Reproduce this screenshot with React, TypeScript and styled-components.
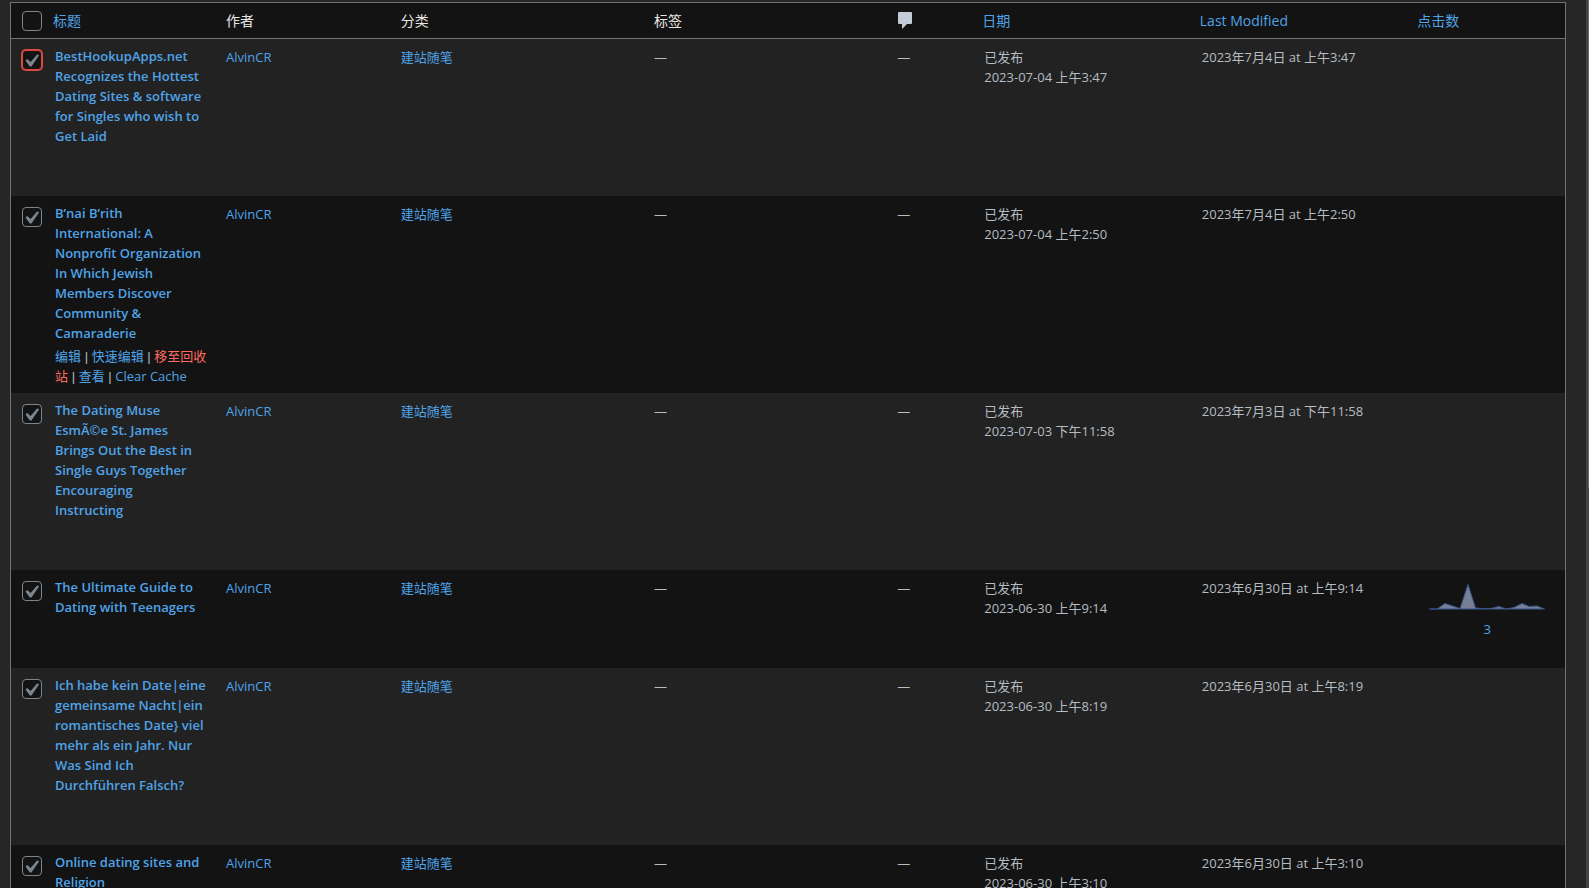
import React, { useState } from "react";
import styled, { createGlobalStyle } from "styled-components";

const color = {
  page: "#262626",
  dark: "#131313",
  stripe: "#222222",
  border: "#727272",
  link: "#4fa3e8",
  text: "#b5bdc2",
  heading: "#e8e6e3",
  danger: "#ff6b60",
  mark: "#7b858e",
};

const GlobalStyle = createGlobalStyle`
  * { box-sizing: border-box; }
  html { background: ${color.page}; overflow: hidden; }
  body {
    margin: 0;
    color: ${color.text};
    font-family: "Open Sans", "Noto Sans CJK SC", sans-serif;
    font-size: 13px;
    line-height: 20px;
  }
`;

const Page = styled.div`
  display: flex;
  height: 100vh;
  overflow: hidden;
`;

const Content = styled.main`
  flex: 1;
  min-width: 0;
  padding: 2px 20px 0 10px;
`;

const ScrollTrack = styled.div`
  display: flex;
  justify-content: flex-end;
  width: 3px;
  background: #454341;
`;

const ScrollThumb = styled.div`
  width: 1px;
  height: 55%;
  background: #686460;
`;

const Table = styled.table`
  width: 100%;
  table-layout: fixed;
  border: 1px solid ${color.border};
  border-spacing: 0;
  background: ${color.dark};
`;

const Col = styled.col<{ $width: string }>`
  width: ${(p) => p.$width};
`;

const HeadCell = styled.th<{ $sortable?: boolean }>`
  height: 36px;
  padding: 0 ${(p) => (p.$sortable ? 8 : 10)}px;
  border-bottom: 1px solid ${color.border};
  color: ${color.heading};
  font-size: 14px;
  font-weight: 400;
  text-align: left;
  vertical-align: middle;
`;

const Row = styled.tr`
  height: 98px;
  vertical-align: top;
  &:nth-child(odd) { background: ${color.stripe}; }
`;

const Cell = styled.td`
  padding: 8px 10px;
`;

const TitleCell = styled.td`
  padding: 7px 10px;
`;

const CheckHeadCell = styled(HeadCell)`
  padding: 1px 0 0 11px;
`;

const CheckCell = styled.td`
  padding: 11px 0 0 11px;
`;

const Link = styled.a<{ $danger?: boolean }>`
  color: ${(p) => (p.$danger ? color.danger : color.link)};
  text-decoration: none;
`;

const TitleLink = styled(Link)`
  display: block;
  font-weight: 600;
  white-space: pre;
`;

const RowActions = styled.div`
  min-height: 43px;
  padding-top: 3px;
  white-space: pre;
`;

const Separator = styled.span`
  font-family: "Liberation Sans", sans-serif;
  line-height: 16px;
`;

const CheckLabel = styled.label`
  position: relative;
  display: block;
  width: 20px;
  height: 20px;
`;

const CheckInput = styled.input<{ $alert?: boolean }>`
  appearance: none;
  display: block;
  width: 20px;
  height: 20px;
  margin: 0;
  border: 1px solid ${(p) => (p.$alert ? "#e0483e" : color.mark)};
  border-radius: 4px;
  background: ${color.dark};
  box-shadow: ${(p) => (p.$alert ? "0 0 0 1px #e0483e" : "none")};
`;

const CheckMark = styled.svg`
  position: absolute;
  top: -2px;
  left: -4px;
  width: 26px;
  height: 26px;
  fill: ${color.mark};
  pointer-events: none;
`;

const CommentIcon = styled.svg`
  display: block;
  margin-left: 1px;
  fill: #c3ccd6;
`;

const Stats = styled(Link)`
  display: flex;
  flex-direction: column;
  align-items: center;
  gap: 8px;
  padding-top: 5px;
`;

function Checkbox({ label, initial, alert }: { label: string; initial?: boolean; alert?: boolean }) {
  const [checked, setChecked] = useState(Boolean(initial));
  return (
    <CheckLabel>
      <CheckInput
        type="checkbox"
        aria-label={label}
        checked={checked}
        $alert={alert}
        onChange={(e) => setChecked(e.target.checked)}
      />
      {checked && (
        <CheckMark viewBox="0 0 20 20" aria-hidden="true">
          <path d="M14.83 4.89l1.34.94-5.81 8.38H9.02L5.78 9.67l1.34-1.25 2.57 2.4z" />
        </CheckMark>
      )}
    </CheckLabel>
  );
}

function Sparkline() {
  return (
    <svg width="116" height="28" viewBox="0 0 116 28" aria-hidden="true">
      <path
        d="M0.5 26 L8 26 L16 20.5 L31 25.5 L39 1.5 L46.5 25 L54 25.5 L62 25.5 L70 23.5 L77 26 L85 24.5 L93 20.5 L100 23.5 L108 23 L115.5 26 Z"
        fill="#767f93"
        stroke="#36568f"
        strokeWidth="1"
      />
    </svg>
  );
}

interface Post {
  title: string;
  published: string;
  modified: string;
  actions?: boolean;
  clicks?: number;
}

const posts: Post[] = [
  {
    title: "BestHookupApps.net\nRecognizes the Hottest\nDating Sites & software\nfor Singles who wish to\nGet Laid",
    published: "2023-07-04 上午3:47",
    modified: "2023年7月4日 at 上午3:47",
  },
  {
    title: "B’nai B’rith\nInternational: A\nNonprofit Organization\nIn Which Jewish\nMembers Discover\nCommunity &\nCamaraderie",
    published: "2023-07-04 上午2:50",
    modified: "2023年7月4日 at 上午2:50",
    actions: true,
  },
  {
    title: "The Dating Muse\nEsmÃ©e St. James\nBrings Out the Best in\nSingle Guys Together\nEncouraging\nInstructing",
    published: "2023-07-03 下午11:58",
    modified: "2023年7月3日 at 下午11:58",
  },
  {
    title: "The Ultimate Guide to\nDating with Teenagers",
    published: "2023-06-30 上午9:14",
    modified: "2023年6月30日 at 上午9:14",
    clicks: 3,
  },
  {
    title: "Ich habe kein Date|eine\ngemeinsame Nacht|ein\nromantisches Date} viel\nmehr als ein Jahr. Nur\nWas Sind Ich\nDurchführen Falsch?",
    published: "2023-06-30 上午8:19",
    modified: "2023年6月30日 at 上午8:19",
  },
  {
    title: "Online dating sites and\nReligion",
    published: "2023-06-30 上午3:10",
    modified: "2023年6月30日 at 上午3:10",
  },
];

const columns = ["34px", "11%", "11.25%", "16.3%", "15.65%", "5.6%", "14%", "14%", "auto"];

export default function App() {
  return (
    <>
      <GlobalStyle />
      <Page>
        <Content>
          <Table>
            <colgroup>
              {columns.map((width, i) => (
                <Col key={i} $width={width} />
              ))}
            </colgroup>
            <thead>
              <tr>
                <CheckHeadCell><Checkbox label="全选" /></CheckHeadCell>
                <HeadCell $sortable><Link href="#title">标题</Link></HeadCell>
                <HeadCell>作者</HeadCell>
                <HeadCell>分类</HeadCell>
                <HeadCell>标签</HeadCell>
                <HeadCell>
                  <CommentIcon width="14" height="17" viewBox="0 0 14 17" role="img" aria-label="评论">
                    <path d="M1 0h12a1 1 0 0 1 1 1v10a1 1 0 0 1-1 1H9L4 17v-5H1a1 1 0 0 1-1-1V1a1 1 0 0 1 1-1z" />
                  </CommentIcon>
                </HeadCell>
                <HeadCell $sortable><Link href="#date">日期</Link></HeadCell>
                <HeadCell $sortable><Link href="#modified">Last Modified</Link></HeadCell>
                <HeadCell $sortable><Link href="#clicks">点击数</Link></HeadCell>
              </tr>
            </thead>
            <tbody>
              {posts.map((post, i) => (
                <Row key={post.title}>
                  <CheckCell><Checkbox label={post.title} initial alert={i === 0} /></CheckCell>
                  <TitleCell>
                    <TitleLink href="#post">{post.title}</TitleLink>
                    <RowActions>
                      {post.actions && (
                        <>
                          <Link href="#edit">编辑</Link>
                          <Separator> | </Separator>
                          <Link href="#quick">快速编辑</Link>
                          <Separator> | </Separator>
                          <Link href="#trash" $danger>移至回收{"\n"}站</Link>
                          <Separator> | </Separator>
                          <Link href="#view">查看</Link>
                          <Separator> | </Separator>
                          <Link href="#cache">Clear Cache</Link>
                        </>
                      )}
                    </RowActions>
                  </TitleCell>
                  <Cell><Link href="#author">AlvinCR</Link></Cell>
                  <Cell><Link href="#category">建站随笔</Link></Cell>
                  <Cell>—</Cell>
                  <Cell>—</Cell>
                  <Cell>已发布<br />{post.published}</Cell>
                  <Cell>{post.modified}</Cell>
                  <Cell>
                    {post.clicks && (
                      <Stats href="#stats">
                        <Sparkline />
                        {post.clicks}
                      </Stats>
                    )}
                  </Cell>
                </Row>
              ))}
            </tbody>
          </Table>
        </Content>
        <ScrollTrack><ScrollThumb /></ScrollTrack>
      </Page>
    </>
  );
}
